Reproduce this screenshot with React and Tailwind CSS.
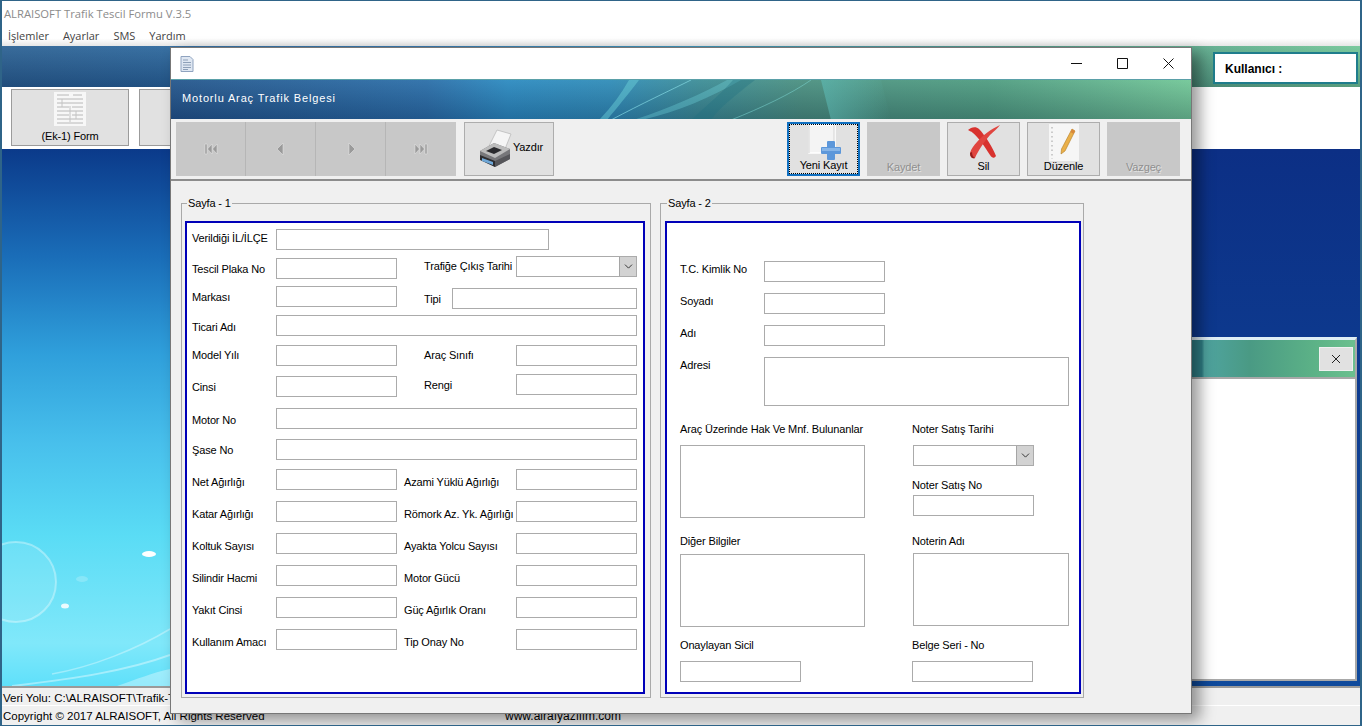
import { ChevronDown } from 'lucide-react';

const LABEL = "text-[11px] leading-[14px] tracking-[-0.15px] text-black whitespace-nowrap";
const FIELD = "block h-[21px] border border-[#ababab] bg-white outline-none";

function Combo() {
  return (
    <div className="flex h-[21px] w-[121px] border border-[#ababab] bg-white">
      <div className="flex-1" />
      <div className="flex w-[17px] items-center justify-center border-l border-[#a5a5a5] bg-[#d2d2d2]">
        <ChevronDown size={13} strokeWidth={1.8} className="text-[#333]" />
      </div>
    </div>
  );
}

// first column pair of the left page: label then short input
function Pair({ label, wide, className = "", labelClass = "" }) {
  return (
    <div className={`flex h-[21px] items-center ${className}`}>
      <span className={`${LABEL} ml-[5px] w-[84px] ${labelClass}`}>{label}</span>
      <input className={`${FIELD} ${wide ? 'w-[361px]' : 'w-[121px]'}`} />
    </div>
  );
}

// the six rows at the bottom of page 1
function WeightRow({ left, right }) {
  return (
    <div className="mt-[11px] flex h-[21px] items-center">
      <span className={`${LABEL} ml-[5px] mt-[4px] w-[84px]`}>{left}</span>
      <input className={`${FIELD} w-[121px]`} />
      <span className={`${LABEL} ml-[7px] mt-[4px] w-[112px]`}>{right}</span>
      <input className={`${FIELD} w-[121px]`} />
    </div>
  );
}

function NavGlyph({ kind }) {
  return (
    <svg width="14" height="12" viewBox="0 0 14 12">
      {kind === 'first' && <path d="M1 1h2v10H1zM8 1v10L3.500 6zM13 1v10L8.500 6z" fill="#9a9a9a" stroke="#e8e8e8" strokeWidth=".5" />}
      {kind === 'prev' && <path d="M9 0v12L3 6z" fill="#9a9a9a" stroke="#e8e8e8" strokeWidth=".5" />}
      {kind === 'next' && <path d="M5 0v12l6-6z" fill="#9a9a9a" stroke="#e8e8e8" strokeWidth=".5" />}
      {kind === 'last' && <path d="M11 1h2v10h-2zM1 1v10l4.500-5zM6 1v10l4.500-5z" fill="#9a9a9a" stroke="#e8e8e8" strokeWidth=".5" />}
    </svg>
  );
}

function NewIcon() {
  return (
    <svg width="36" height="36" viewBox="0 0 36 36">
      <path d="M3 1h26v28H3z" fill="#f4f4f4" stroke="#fff" strokeWidth="1.5" />
      <path d="M3 1v28" stroke="#cfcfcf" strokeWidth="1" />
      <path d="M28 1v16" stroke="#d4d4d4" strokeWidth="1" />
      <path d="M22 17h6a1 1 0 0 1 1 1v5h5a1 1 0 0 1 1 1v5a1 1 0 0 1-1 1h-5v5a1 1 0 0 1-1 1h-6a1 1 0 0 1-1-1v-5h-5a1 1 0 0 1-1-1v-5a1 1 0 0 1 1-1h5v-5a1 1 0 0 1 1-1z" fill="#5c97da" />
      <path d="M16 24h18v3H16z" fill="#86b5e8" />
    </svg>
  );
}

function DeleteIcon() {
  return (
    <svg width="34" height="36" viewBox="0 0 34 36">
      <path d="M1 6C4 3 9 2 12 5C18 11 26 24 29 32C27 35 25 34 23 31C18 23 11 13 6 9C4 7 2 7 1 6z" fill="#d8322e" />
      <path d="M33 1C31 4 27 7 23 11C17 18 11 27 8 34C5 35 3 33 3 29C4 25 7 21 10 18C15 12 24 5 33 1z" fill="#e0453f" />
      <path d="M3 29C3 33 5 35 8 34C6 33 5 31 5 28z" fill="#951f1c" />
    </svg>
  );
}

function EditIcon() {
  return (
    <svg width="32" height="38" viewBox="0 0 32 38">
      <path d="M1 0h30v37H1z" fill="#f6f6f6" />
      <path d="M4 3v32" stroke="#bdbdbd" strokeWidth="1.5" strokeDasharray="1.5 3" />
      <path d="M24 5l3 2-10 20-4 3 .5-5z" fill="#eab04a" stroke="#b27c24" strokeWidth=".6" />
      <path d="M24 5l3 2-1.500 3-3-2z" fill="#d9893a" />
    </svg>
  );
}

function PrinterIcon() {
  return (
    <svg width="34" height="44" viewBox="0 0 34 44">
      <path d="M11 19L19 3l14 4-6 15z" fill="#f5f5f5" stroke="#b5b5b5" strokeWidth=".7" />
      <path d="M2 24l14-8 16 6v10L17 40 2 32z" fill="#77777a" />
      <path d="M2 24l14-8 16 6-15 9z" fill="#bcbcbc" />
      <path d="M2 28l15 6v6L2 33z" fill="#2d2d30" />
      <path d="M17 34l15-7v5L17 40z" fill="#56565a" />
      <path d="M4 31l11 4v3L4 34z" fill="#6fa8d8" />
      <path d="M8 24l8-4 8 3-8 4z" fill="#2b2b2e" />
    </svg>
  );
}

function ToolButton({ label, disabled, focused, children }) {
  if (disabled) {
    return (
      <div className="flex h-[54px] w-[73px] items-end justify-center bg-[#c8c8c8] pb-[2px]">
        <span className="text-[11px] leading-[14px] tracking-[-0.15px] text-[#8f8f8f] [text-shadow:1px_1px_0_#e4e4e4]">{label}</span>
      </div>
    );
  }
  return (
    <div className={`relative flex h-[54px] w-[73px] flex-col items-center justify-end bg-[#e1e1e1] pb-[2px] ${focused ? 'border-2 border-[#0f6fc0]' : 'border border-[#adadad]'}`}>
      <div className={`absolute left-0 right-0 top-0 flex justify-center ${focused ? '' : 'pt-px'}`}>{children}</div>
      {focused && <div className="absolute inset-0 border border-dotted border-black" />}
      <span className="relative text-[11px] leading-[14px] tracking-[-0.15px] text-black">{label}</span>
    </div>
  );
}

function FormThumb() {
  return (
    <svg width="32" height="34" viewBox="0 0 32 34">
      <path d="M0 0h32v34H0z" fill="#f7f7f7" />
      <path d="M3 3h12M19 3h9M3 7h26M3 11h26M3 15h12M18 15h11M3 19h26M3 23h12M18 23h11M3 27h26M3 31h26" stroke="#b8b8b8" strokeWidth="1" />
      <path d="M16 14v16M8 7v8M22 19v8" stroke="#c4c4c4" strokeWidth="1" />
    </svg>
  );
}

function TitleDoc() {
  return (
    <svg width="14" height="16" viewBox="0 0 14 16">
      <path d="M1 .5h9l3 3v12H1z" fill="#dfe7f2" stroke="#8fa3bf" strokeWidth="1" />
      <path d="M3 4h5M3 6.500h8M3 9h8M3 11.500h8M3 13.500h5" stroke="#8ea0b8" strokeWidth="1" />
    </svg>
  );
}

function Fieldset({ title, className, children }) {
  return (
    <fieldset className={`h-[502px] border border-[#a9a9a9] ${className}`}>
      <legend className={`${LABEL} ml-[2px] px-px`}>{title}</legend>
      {children}
    </fieldset>
  );
}

export default function App() {
  return (
    <div className="relative flex h-[726px] w-[1362px] flex-col overflow-hidden border-x-2 border-y border-[#2f6488] bg-white font-['Liberation_Sans',sans-serif]">
      {/* main window chrome */}
      <div className="h-[26px] pl-[2px] pt-[4px] font-['Open_Sans',sans-serif] text-[11.25px] leading-[17px] text-[#8b8b8b]">ALRAISOFT Trafik Tescil Formu V.3.5</div>
      <div className="flex h-[19px] gap-[14px] bg-gradient-to-b from-white from-60% to-[#e6e6e6] pl-[6px] font-['Open_Sans',sans-serif] text-[11px] leading-[18px] text-[#444]">
        <span>İşlemler</span>
        <span>Ayarlar</span>
        <span>SMS</span>
        <span>Yardım</span>
      </div>

      <div className="flex h-[41px] justify-end bg-[linear-gradient(180deg,rgba(255,255,255,.08),rgba(0,0,30,.2)),linear-gradient(90deg,#285f92_0%,#2a6ea8_30%,#2f8cb5_50%,#47907f_75%,#5aa98a_88%,#70c596_100%)] pr-[2px] pt-[6px]">
        <div className="flex h-[32px] w-[145px] items-center border-2 border-[#1f7d8c] bg-white pl-[10px] pt-[2px] text-[12px] font-bold text-black">Kullanıcı :</div>
      </div>

      <div className="flex h-[62px] gap-[10px] bg-white pl-[9px] pt-[2px]">
        <div className="relative flex h-[57px] w-[118px] items-end justify-center border border-[#9b9b9b] bg-[#e1e1e1] pb-[2px]">
          <div className="absolute left-[42px] top-[2px]"><FormThumb /></div>
          <span className="text-[11px] leading-[14px] tracking-[-0.15px] text-black">(Ek-1) Form</span>
        </div>
        <div className="h-[57px] w-[118px] border border-[#9b9b9b] bg-[#e1e1e1]" />
      </div>

      {/* desktop area */}
      <div className="relative grid h-[537px] grid-cols-2">
        <div className="bg-[linear-gradient(180deg,#0b3a8a_0%,#1a6db8_20%,#2f9fdb_38%,#48c0ec_55%,#5adcf5_72%,#80e8fa_92%,#5fe0fa_100%)]" />
        <div className="bg-[linear-gradient(180deg,#0c2f85_0%,#0f4a9c_100%)]" />
        <svg className="absolute left-0 top-0" width="168" height="537" viewBox="0 0 168 537">
          <circle cx="14" cy="433" r="40" fill="#ffffff" fillOpacity=".1" stroke="#ffffff" strokeOpacity=".35" strokeWidth="2" />
          <ellipse cx="147" cy="405" rx="7" ry="3" fill="#fff" />
          <ellipse cx="63" cy="457" rx="4" ry="2.500" fill="#fff" fillOpacity=".85" />
          <ellipse cx="80" cy="430" rx="6" ry="3" fill="#fff" fillOpacity=".2" />
          <path d="M50 525C90 518 135 500 168 480" stroke="#fff" strokeOpacity=".35" strokeWidth="1.500" fill="none" />
          <path d="M10 537C70 530 125 522 168 506" stroke="#fff" strokeOpacity=".4" strokeWidth="2" fill="none" />
          <path d="M115 537C135 530 150 524 168 520V537z" fill="#fff" fillOpacity=".35" />
        </svg>
      </div>

      {/* status lines */}
      <div className="h-[19px] border-t-2 border-[#9a9a9a] bg-[#f0f0f0] pl-px text-[11.5px] leading-[20px] text-black">Veri Yolu: C:\ALRAISOFT\Trafik-Tescil</div>
      <div className="flex h-[20px] border-t border-white bg-[#f0f0f0] pl-px leading-[21px] text-black">
        <span className="w-[502px] text-[11.5px]">Copyright © 2017 ALRAISOFT, All Rights Reserved</span>
        <span className="text-[12px]">www.alraıyazılım.com</span>
      </div>

      {/* small window behind the form */}
      <div className="absolute left-[1100px] top-[336px] flex h-[344px] w-[255px] flex-col border-2 border-t-[3px] border-[#a8a8a8] border-t-[#dfeef5] bg-white">
        <div className="flex h-[39px] justify-end border-b-2 border-[#a8a8a8] bg-[linear-gradient(90deg,#2f7f86_0%,#2f7f86_39%,#4fa4a0_40%,#4a9a84_58%,#5db387_85%,#6cc08f_100%)] pr-[2px] pt-[7px]">
          <div className="flex h-[24px] w-[34px] items-center justify-center border border-[#f0f0f0] bg-[#e1e1e1]">
            <svg width="10" height="10" viewBox="0 0 10 10"><path d="M1 1l8 8M9 1L1 9" stroke="#222" strokeWidth="1" /></svg>
          </div>
        </div>
      </div>

      {/* form window */}
      <div className="absolute left-[168px] top-[46px] flex h-[667px] w-[1022px] flex-col border border-[#777] bg-[#f0f0f0] shadow-[8px_6px_14px_rgba(0,0,0,0.4)]">
        <div className="flex h-[31px] items-center justify-between bg-white pl-[9px] pr-[17px]">
          <TitleDoc />
          <div className="flex items-center gap-[35px]">
            <svg width="11" height="11" viewBox="0 0 11 11"><path d="M0 5.500h11" stroke="#111" strokeWidth="1" /></svg>
            <svg width="11" height="11" viewBox="0 0 11 11"><path d="M.5.500h10v10H.5z" fill="none" stroke="#111" strokeWidth="1" /></svg>
            <svg width="11" height="11" viewBox="0 0 11 11"><path d="M.5.500l10 10M10.500.500l-10 10" stroke="#111" strokeWidth="1" /></svg>
          </div>
        </div>

        <div className="relative flex h-[40px] items-center overflow-hidden border-t border-[#5aa0a8] bg-[linear-gradient(180deg,rgba(255,255,255,.06),rgba(0,0,30,.2)),linear-gradient(90deg,#23568c_0%,#2a6ea8_25%,#2b8ac0_33%,#2f8cb8_43%,#3c8d96_52%,#4a9080_62%,#4e9c80_80%,#5fb08c_90%,#71c797_100%)] pb-[2px] pl-[11px] text-[11px] tracking-[0.85px] text-white">
          <svg className="absolute left-0 top-0" width="1020" height="40" viewBox="0 0 1020 40">
            <defs>
              <linearGradient id="facet" x1="0" x2="1" y1="0" y2="0">
                <stop offset="0" stopColor="#5fc0bc" stopOpacity=".55" />
                <stop offset="1" stopColor="#5fc0bc" stopOpacity="0" />
              </linearGradient>
            </defs>
            <path d="M650 0h60l10 40h-60z" fill="url(#facet)" />
            <path d="M428 40C440 28 450 14 458 0h10C456 16 444 30 436 40z" fill="#6fd4dc" fillOpacity=".45" />
            <path d="M470 40C500 34 540 18 570 0h-14C530 14 495 30 462 40z" fill="#6fd4dc" fillOpacity=".35" />
            <path d="M520 40C535 26 550 14 562 0h22C566 14 548 28 540 40z" fill="#1f6f80" fillOpacity=".35" />
            <path d="M560 40C590 28 620 14 640 0" stroke="#7fdcd8" strokeOpacity=".5" strokeWidth="1" fill="none" />
            <path d="M440 40C470 24 500 10 520 0" stroke="#8fe6ee" strokeOpacity=".6" strokeWidth="1" fill="none" />
          </svg>
          <span className="relative">Motorlu Araç Trafik Belgesi</span>
        </div>

        {/* toolbar */}
        <div className="flex h-[60px] pl-[5px] pr-[11px] pt-[3px]">
          <div className="flex h-[54px] w-[280px] bg-[#c8c8c8]">
            <div className="flex w-[70px] items-center justify-center border-r border-[#b6b6b6]"><NavGlyph kind="first" /></div>
            <div className="flex w-[70px] items-center justify-center border-r border-[#b6b6b6]"><NavGlyph kind="prev" /></div>
            <div className="flex w-[70px] items-center justify-center border-r border-[#b6b6b6]"><NavGlyph kind="next" /></div>
            <div className="flex w-[70px] items-center justify-center"><NavGlyph kind="last" /></div>
          </div>
          <div className="ml-[8px] flex h-[54px] w-[90px] items-center border border-[#adadad] bg-[#e1e1e1] pl-[13px]">
            <PrinterIcon />
            <span className="ml-[1px] -mt-[3px] text-[11px] tracking-[-0.15px] text-black">Yazdır</span>
          </div>
          <div className="ml-auto flex gap-[7px]">
            <ToolButton label="Yeni Kayıt" focused><NewIcon /></ToolButton>
            <ToolButton label="Kaydet" disabled />
            <ToolButton label="Sil"><DeleteIcon /></ToolButton>
            <ToolButton label="Düzenle"><EditIcon /></ToolButton>
            <ToolButton label="Vazgeç" disabled />
          </div>
        </div>
        <div className="h-[2px] bg-[#8c8c8c]" />

        {/* form body */}
        <div className="flex gap-[9px] pl-[10px] pt-[15px]">
          <Fieldset title="Sayfa - 1" className="w-[470px] pl-[3px]">
            <div className="mt-[11px] h-[473px] w-[460px] border-2 border-[#0000b8] bg-white pt-[6px]">
              <div className="flex h-[21px] items-center">
                <span className={`${LABEL} -mt-[3px] ml-[5px] w-[84px]`}>Verildiği İL/İLÇE</span>
                <input className={`${FIELD} w-[273px]`} />
              </div>
              <div className="mt-[8px] flex h-[21px] items-center">
                <Pair label="Tescil Plaka No" />
                <span className={`${LABEL} -mt-[5px] ml-[27px] w-[92px]`}>Trafiğe Çıkış Tarihi</span>
                <div className="-mt-[4px]"><Combo /></div>
              </div>
              <div className="mt-[7px] flex h-[21px] items-start">
                <Pair label="Markası" />
                <div className="ml-[27px] mt-[2px] flex h-[21px] items-center">
                  <span className={`${LABEL} w-[28px]`}>Tipi</span>
                  <input className={`${FIELD} w-[185px]`} />
                </div>
              </div>
              <Pair label="Ticari Adı" wide className="mt-[8px]" labelClass="mt-[2px]" />
              <div className="mt-[9px] flex h-[21px] items-center">
                <Pair label="Model Yılı" labelClass="-mt-[2px]" />
                <span className={`${LABEL} -mt-[2px] ml-[27px] w-[92px]`}>Araç Sınıfı</span>
                <input className={`${FIELD} w-[121px]`} />
              </div>
              <div className="mt-[10px] flex h-[21px] items-start">
                <Pair label="Cinsi" />
                <div className="-mt-[2px] ml-[27px] flex h-[21px] items-center">
                  <span className={`${LABEL} w-[92px]`}>Rengi</span>
                  <input className={`${FIELD} w-[121px]`} />
                </div>
              </div>
              <Pair label="Motor No" wide className="mt-[11px]" labelClass="mt-[2px]" />
              <Pair label="Şase No" wide className="mt-[10px]" />
              <div className="-mt-[2px]">
                <WeightRow left="Net Ağırlığı" right="Azami Yüklü Ağırlığı" />
              </div>
              <WeightRow left="Katar Ağırlığı" right="Römork Az. Yk. Ağırlığı" />
              <WeightRow left="Koltuk Sayısı" right="Ayakta Yolcu Sayısı" />
              <WeightRow left="Silindir Hacmi" right="Motor Gücü" />
              <WeightRow left="Yakıt Cinsi" right="Güç Ağırlık Oranı" />
              <WeightRow left="Kullanım Amacı" right="Tip Onay No" />
            </div>
          </Fieldset>

          <Fieldset title="Sayfa - 2" className="w-[424px] pl-[4px]">
            <div className="mt-[11px] h-[473px] w-[416px] border-2 border-[#0000b8] bg-white pl-[13px] pt-[38px]">
              <div className="flex h-[21px] items-center">
                <span className={`${LABEL} -mt-[6px] w-[84px]`}>T.C. Kimlik No</span>
                <input className={`${FIELD} w-[121px]`} />
              </div>
              <div className="mt-[11px] flex h-[21px] items-center">
                <span className={`${LABEL} -mt-[6px] w-[84px]`}>Soyadı</span>
                <input className={`${FIELD} w-[121px]`} />
              </div>
              <div className="mt-[11px] flex h-[21px] items-center">
                <span className={`${LABEL} -mt-[6px] w-[84px]`}>Adı</span>
                <input className={`${FIELD} w-[121px]`} />
              </div>
              <div className="mt-[11px] flex">
                <span className={`${LABEL} mt-[1px] w-[84px]`}>Adresi</span>
                <textarea className={`${FIELD} h-[49px] w-[305px] resize-none`} />
              </div>

              <div className="mt-[16px] flex">
                <div className="w-[232px]">
                  <div className={LABEL}>Araç Üzerinde Hak Ve Mnf. Bulunanlar</div>
                  <textarea className={`${FIELD} mt-[9px] h-[73px] w-[185px] resize-none`} />
                  <div className={`${LABEL} mt-[16px]`}>Diğer Bilgiler</div>
                  <textarea className={`${FIELD} mt-[6px] h-[73px] w-[185px] resize-none`} />
                  <div className={`${LABEL} mt-[11px]`}>Onaylayan Sicil</div>
                  <input className={`${FIELD} mt-[9px] w-[121px]`} />
                </div>
                <div>
                  <div className={LABEL}>Noter Satış Tarihi</div>
                  <div className="ml-px mt-[9px]"><Combo /></div>
                  <div className={`${LABEL} mt-[12px]`}>Noter Satış No</div>
                  <input className={`${FIELD} ml-px mt-[3px] w-[121px]`} />
                  <div className={`${LABEL} mt-[18px]`}>Noterin Adı</div>
                  <textarea className={`${FIELD} ml-px mt-[5px] h-[73px] w-[156px] resize-none`} />
                  <div className={`${LABEL} mt-[12px]`}>Belge Seri - No</div>
                  <input className={`${FIELD} mt-[9px] w-[121px]`} />
                </div>
              </div>
            </div>
          </Fieldset>
        </div>
      </div>
    </div>
  );
}
